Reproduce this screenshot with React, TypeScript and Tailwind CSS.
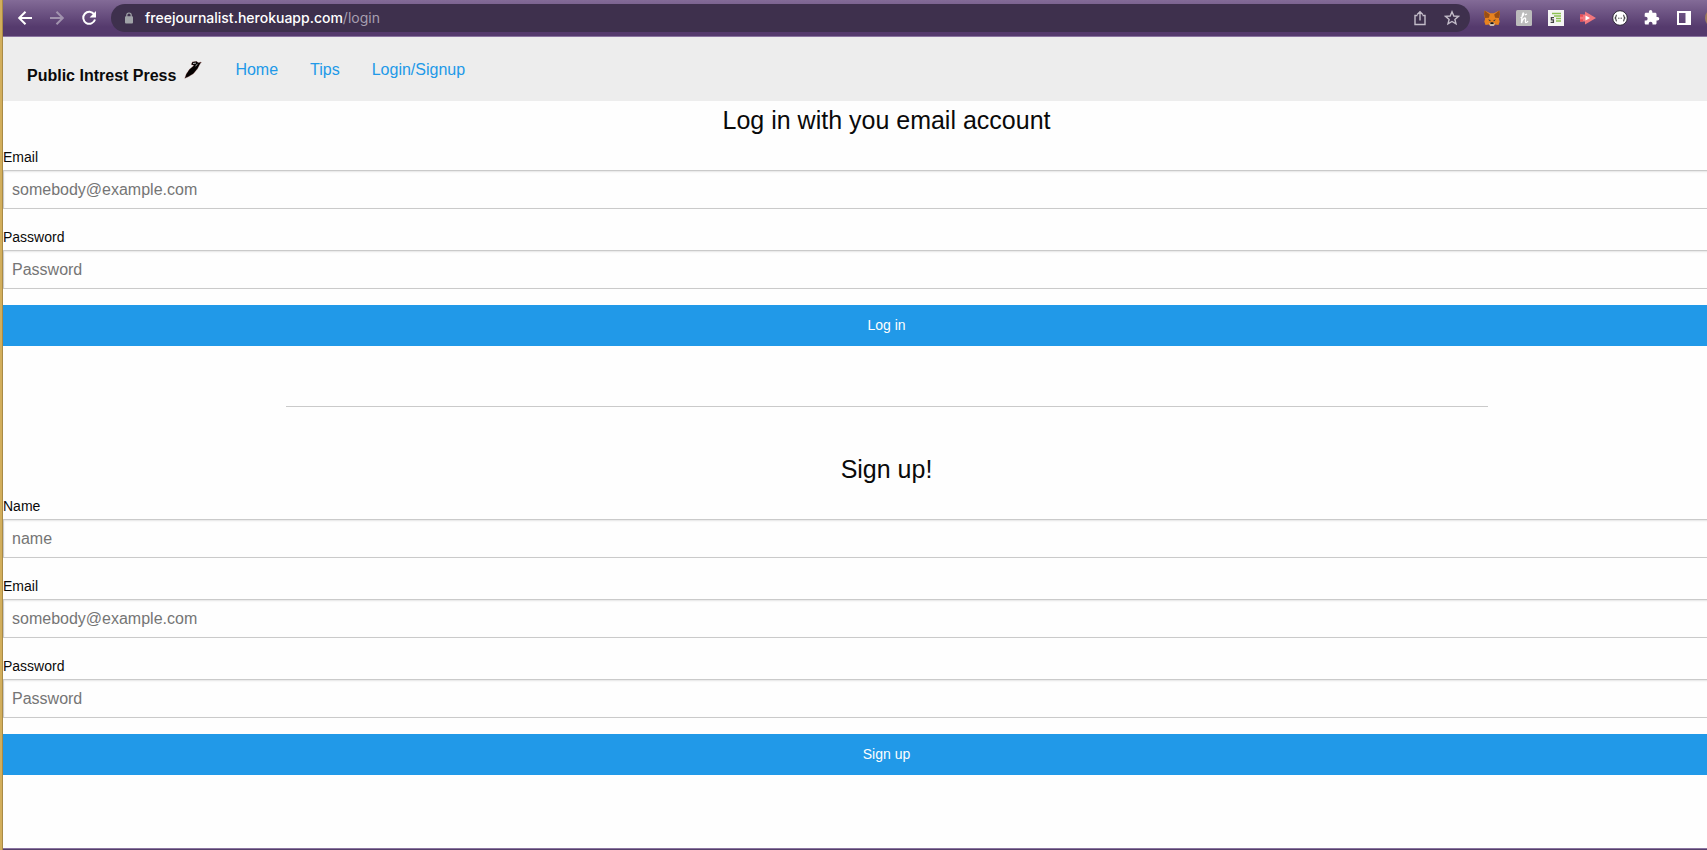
import type { ReactNode } from 'react';

const navLinks = ['Home', 'Tips', 'Login/Signup'];

type FieldProps = { id: string; label: string; type: string; placeholder: string };

function Field({ id, label, type, placeholder }: FieldProps) {
  return (
    <div className="mb-4">
      <label htmlFor={id} className="block text-sm leading-[25px] text-[#0a0a0a]">
        {label}
      </label>
      <input
        id={id}
        type={type}
        placeholder={placeholder}
        className="block h-[39px] w-full border border-[#cacaca] bg-[#fefefe] px-2 text-base text-[#0a0a0a] shadow-[inset_0_1px_2px_rgba(10,10,10,0.1)] outline-none placeholder:text-[#757575]"
      />
    </div>
  );
}

function AccountForm({ title, action, children }: { title: string; action: string; children: ReactNode }) {
  return (
    <form onSubmit={(e) => e.preventDefault()}>
      <h4 className="mb-1.5 text-center text-[25px] leading-[38px] text-[#0a0a0a]">{title}</h4>
      {children}
      <button type="submit" className="block h-[41px] w-full bg-[#2199e8] pb-0.5 text-center text-sm text-[#fefefe]">
        {action}
      </button>
    </form>
  );
}

function ToolButton({ label, children }: { label: string; children: ReactNode }) {
  return (
    <button type="button" aria-label={label} className="size-4 shrink-0">
      {children}
    </button>
  );
}

function BrowserBar() {
  return (
    <header className="flex h-[37px] items-center overflow-hidden border-b border-[#8a74a0] bg-linear-to-b from-[#836b97] to-[#553a6d] to-75% pl-3.5">
      <div className="flex shrink-0 gap-4">
        <ToolButton label="Back">
          <svg viewBox="0 0 16 16" fill="none" stroke="#fff" strokeWidth="2">
            <path d="M15 8H2.500M8.500 1.700 2.200 8l6.300 6.300" />
          </svg>
        </ToolButton>
        <ToolButton label="Forward">
          <svg viewBox="0 0 16 16" fill="none" stroke="#a193ae" strokeWidth="2">
            <path d="M1 8h12.500M7.500 1.700 13.800 8l-6.300 6.300" />
          </svg>
        </ToolButton>
        <ToolButton label="Reload">
          <svg viewBox="0 0 16 16" fill="none" stroke="#fff" strokeWidth="2">
            <path d="M13.200 4.400A6 6 0 1 0 14 9.500" />
            <path d="M15 1v6.400H8.600z" fill="#fff" stroke="none" />
          </svg>
        </ToolButton>
      </div>

      <div className="mx-3.5 flex h-7 flex-1 items-center rounded-full bg-[#3e304d] pr-2.5 pl-3.5">
        <svg viewBox="0 0 8 12" className="mr-3 h-3 w-2 shrink-0">
          <path d="M1.800 5V3.200a2.200 2.200 0 0 1 4.400 0V5" fill="none" stroke="#a0a3a8" strokeWidth="1.200" />
          <rect y="4.200" width="8" height="7.200" rx="1" fill="#a0a3a8" />
        </svg>
        <div className="flex-1 font-[Inter,sans-serif] text-sm text-[#a79fb0]">
          <span className="font-medium text-white">freejournalist.herokuapp.com</span>/login
        </div>
        <div className="flex gap-4">
          <ToolButton label="Share">
            <svg viewBox="0 0 16 16" fill="none" stroke="#c3bcc9" strokeWidth="1.400">
              <path d="M5.500 5.500H3v9h10v-9h-2.500M8 10.500V2M5.200 4.600 8 1.800l2.800 2.800" />
            </svg>
          </ToolButton>
          <ToolButton label="Bookmark">
            <svg viewBox="0 0 16 16" fill="none" stroke="#c3bcc9" strokeWidth="1.400">
              <path d="m8 1.800 1.800 4.200 4.600.400-3.500 3 1.100 4.500L8 11.500l-4 2.400 1.100-4.500-3.500-3L6.200 6z" />
            </svg>
          </ToolButton>
        </div>
      </div>

      <div className="-mr-[18px] flex shrink-0 items-center gap-4">
        <ToolButton label="Wallet">
          <svg viewBox="0 0 16 16">
            <path d="m.6.6 5.600 2.700h3.600L15.400.6l.5 4-1 4.400.8 2.500-1.200 3.600-3.200-.6L9.800 16H6.200l-1.500-1.500-3.200.6L.3 11.500 1.100 9 .1 4.600z" fill="#e8821e" />
            <path d="m.6.6 5.200 3.900-.9 3.200L1 7.900.1 4.600zM15.400.6l-5.200 3.900.9 3.200 3.900.2.900-3.300z" fill="#9a4e16" />
            <path d="m4 9.400 2.500.7-.3 1.300zM12 9.400l-2.500.7.3 1.300z" fill="#233447" />
            <path d="m5.200 13.500 1.200-1h3.200l1.200 1-1 2.500H6.200z" fill="#c9bdb2" />
            <path d="M6.600 12.300h2.800l.3 1.700H6.300z" fill="#161616" />
          </svg>
        </ToolButton>
        <ToolButton label="Coupons">
          <svg viewBox="0 0 16 16">
            <rect width="16" height="16" rx="1.500" fill="#bcbcbc" />
            <path d="M4.500 7.500C7 6.500 8.500 3.500 7.300 3 6 3 5.800 8 5.500 13 6.300 9.500 8.500 7.200 9.400 8.200c.8 1-.8 4.300.5 4.500.9 0 1.600-.8 2.100-1.700M9 4.800l2-.8" fill="none" stroke="#fff" strokeWidth="1.300" />
          </svg>
        </ToolButton>
        <ToolButton label="Summary">
          <svg viewBox="0 0 16 16">
            <rect width="16" height="16" fill="#f4f4f4" />
            <path d="M4 3.500h9M6 6h7M8 8.500h5M8 11h5" stroke="#8cc152" strokeWidth="1.300" />
            <path d="M6 7.700H3.400v2.200h2v2.400H2.600" fill="none" stroke="#444" strokeWidth="1.300" />
          </svg>
        </ToolButton>
        <ToolButton label="Recorder">
          <svg viewBox="0 0 16 16">
            <path d="M0 4.500h5V1.500L16 8 5 14.500v-3H0z" fill="#f2777d" />
            <path d="M0 4.500h3v2.300H0zM0 9.200h3v2.300H0z" fill="#e84c55" />
            <path d="M5.500 5.500 10 8l-4.500 2.500z" fill="#fff" />
          </svg>
        </ToolButton>
        <ToolButton label="JSON viewer">
          <svg viewBox="0 0 16 16">
            <circle cx="8" cy="8" r="7.300" fill="#fff" stroke="#2c2635" strokeWidth="1" />
            <path d="M4.800 5c-1.300 0-.4 2.500-1.500 3 1.100.5.200 3 1.500 3M11.200 5c1.300 0 .4 2.500 1.500 3-1.100.5-.2 3-1.500 3" fill="none" stroke="#333" strokeWidth="1.100" />
            <path d="M6 8.200h4" stroke="#555" strokeWidth="1" strokeDasharray="1 .5" />
          </svg>
        </ToolButton>
        <ToolButton label="Extensions">
          <svg viewBox="1 1 23 23" fill="#fff">
            <path d="M20.500 11H19V7c0-1.100-.9-2-2-2h-4V3.500a2.500 2.500 0 0 0-5 0V5H4c-1.100 0-2 .9-2 2v3.800h1.500a2.700 2.700 0 0 1 0 5.400H2V20c0 1.100.9 2 2 2h3.800v-1.500a2.700 2.700 0 0 1 5.400 0V22H17c1.100 0 2-.9 2-2v-4h1.500a2.500 2.500 0 0 0 0-5z" />
          </svg>
        </ToolButton>
        <ToolButton label="Side panel">
          <svg viewBox="0 0 16 16">
            <path d="M1 1h14v14H1zM3 3v10h6.500V3z" fill="#fff" fillRule="evenodd" />
          </svg>
        </ToolButton>
        <button type="button" aria-label="Profile" className="-ml-[3px] size-5 shrink-0 rounded-full bg-[#9b7a5c]" />
      </div>
    </header>
  );
}

function Quill() {
  return (
    <svg viewBox="0 0 18 18" className="size-[18px]" aria-hidden="true">
      <path
        d="M.8 17.300 2.300 13 5.500 8.300 10 4.500 7.300 3.600 8.300.9 12.500.3l1.800 1.500L17.400 1l-1.700 2.500-2.200 4.200-4.200 5.100-5 2.900z"
        fill="#050202"
        stroke="#8e3a36"
        strokeWidth=".5"
        strokeDasharray="1 1"
      />
      <path d="m9 2.500 3-.4M11.500 4.900l2-1.700" stroke="#ededed" strokeWidth=".8" />
    </svg>
  );
}

export default function App() {
  return (
    <div className="flex min-h-screen overflow-hidden bg-[#fefefe] font-['Liberation_Sans',Arial,sans-serif]">
      <div className="w-[3px] shrink-0 border-r border-[#a98a45] bg-[#d2ae5c]" />
      <div className="flex min-w-0 flex-1 flex-col border-b border-[#54406a]">
        <BrowserBar />
        <nav className="flex h-16 items-start bg-[#ededed] pl-6">
          <a href="#home" className="mr-[33px] flex items-end gap-2 pt-6 font-bold leading-7 text-[#0a0a0a]">
            Public Intrest Press
            <span className="mb-[11px]">
              <Quill />
            </span>
          </a>
          <ul className="flex gap-8 pt-5 leading-[26px]">
            {navLinks.map((name) => (
              <li key={name}>
                <a href={'#' + name.toLowerCase()} className="text-[#2199e8]">
                  {name}
                </a>
              </li>
            ))}
          </ul>
        </nav>

        <main className="-mr-[63px] flex-1">
          <AccountForm title="Log in with you email account" action="Log in">
            <Field id="login-email" label="Email" type="email" placeholder="somebody@example.com" />
            <Field id="login-password" label="Password" type="password" placeholder="Password" />
          </AccountForm>
          <hr className="mx-auto mt-[60px] mb-[43px] max-w-[1202px] border-[#cacaca]" />
          <AccountForm title="Sign up!" action="Sign up">
            <Field id="signup-name" label="Name" type="text" placeholder="name" />
            <Field id="signup-email" label="Email" type="email" placeholder="somebody@example.com" />
            <Field id="signup-password" label="Password" type="password" placeholder="Password" />
          </AccountForm>
        </main>
        <div className="h-px bg-[#8a74a0]" />
      </div>
    </div>
  );
}
